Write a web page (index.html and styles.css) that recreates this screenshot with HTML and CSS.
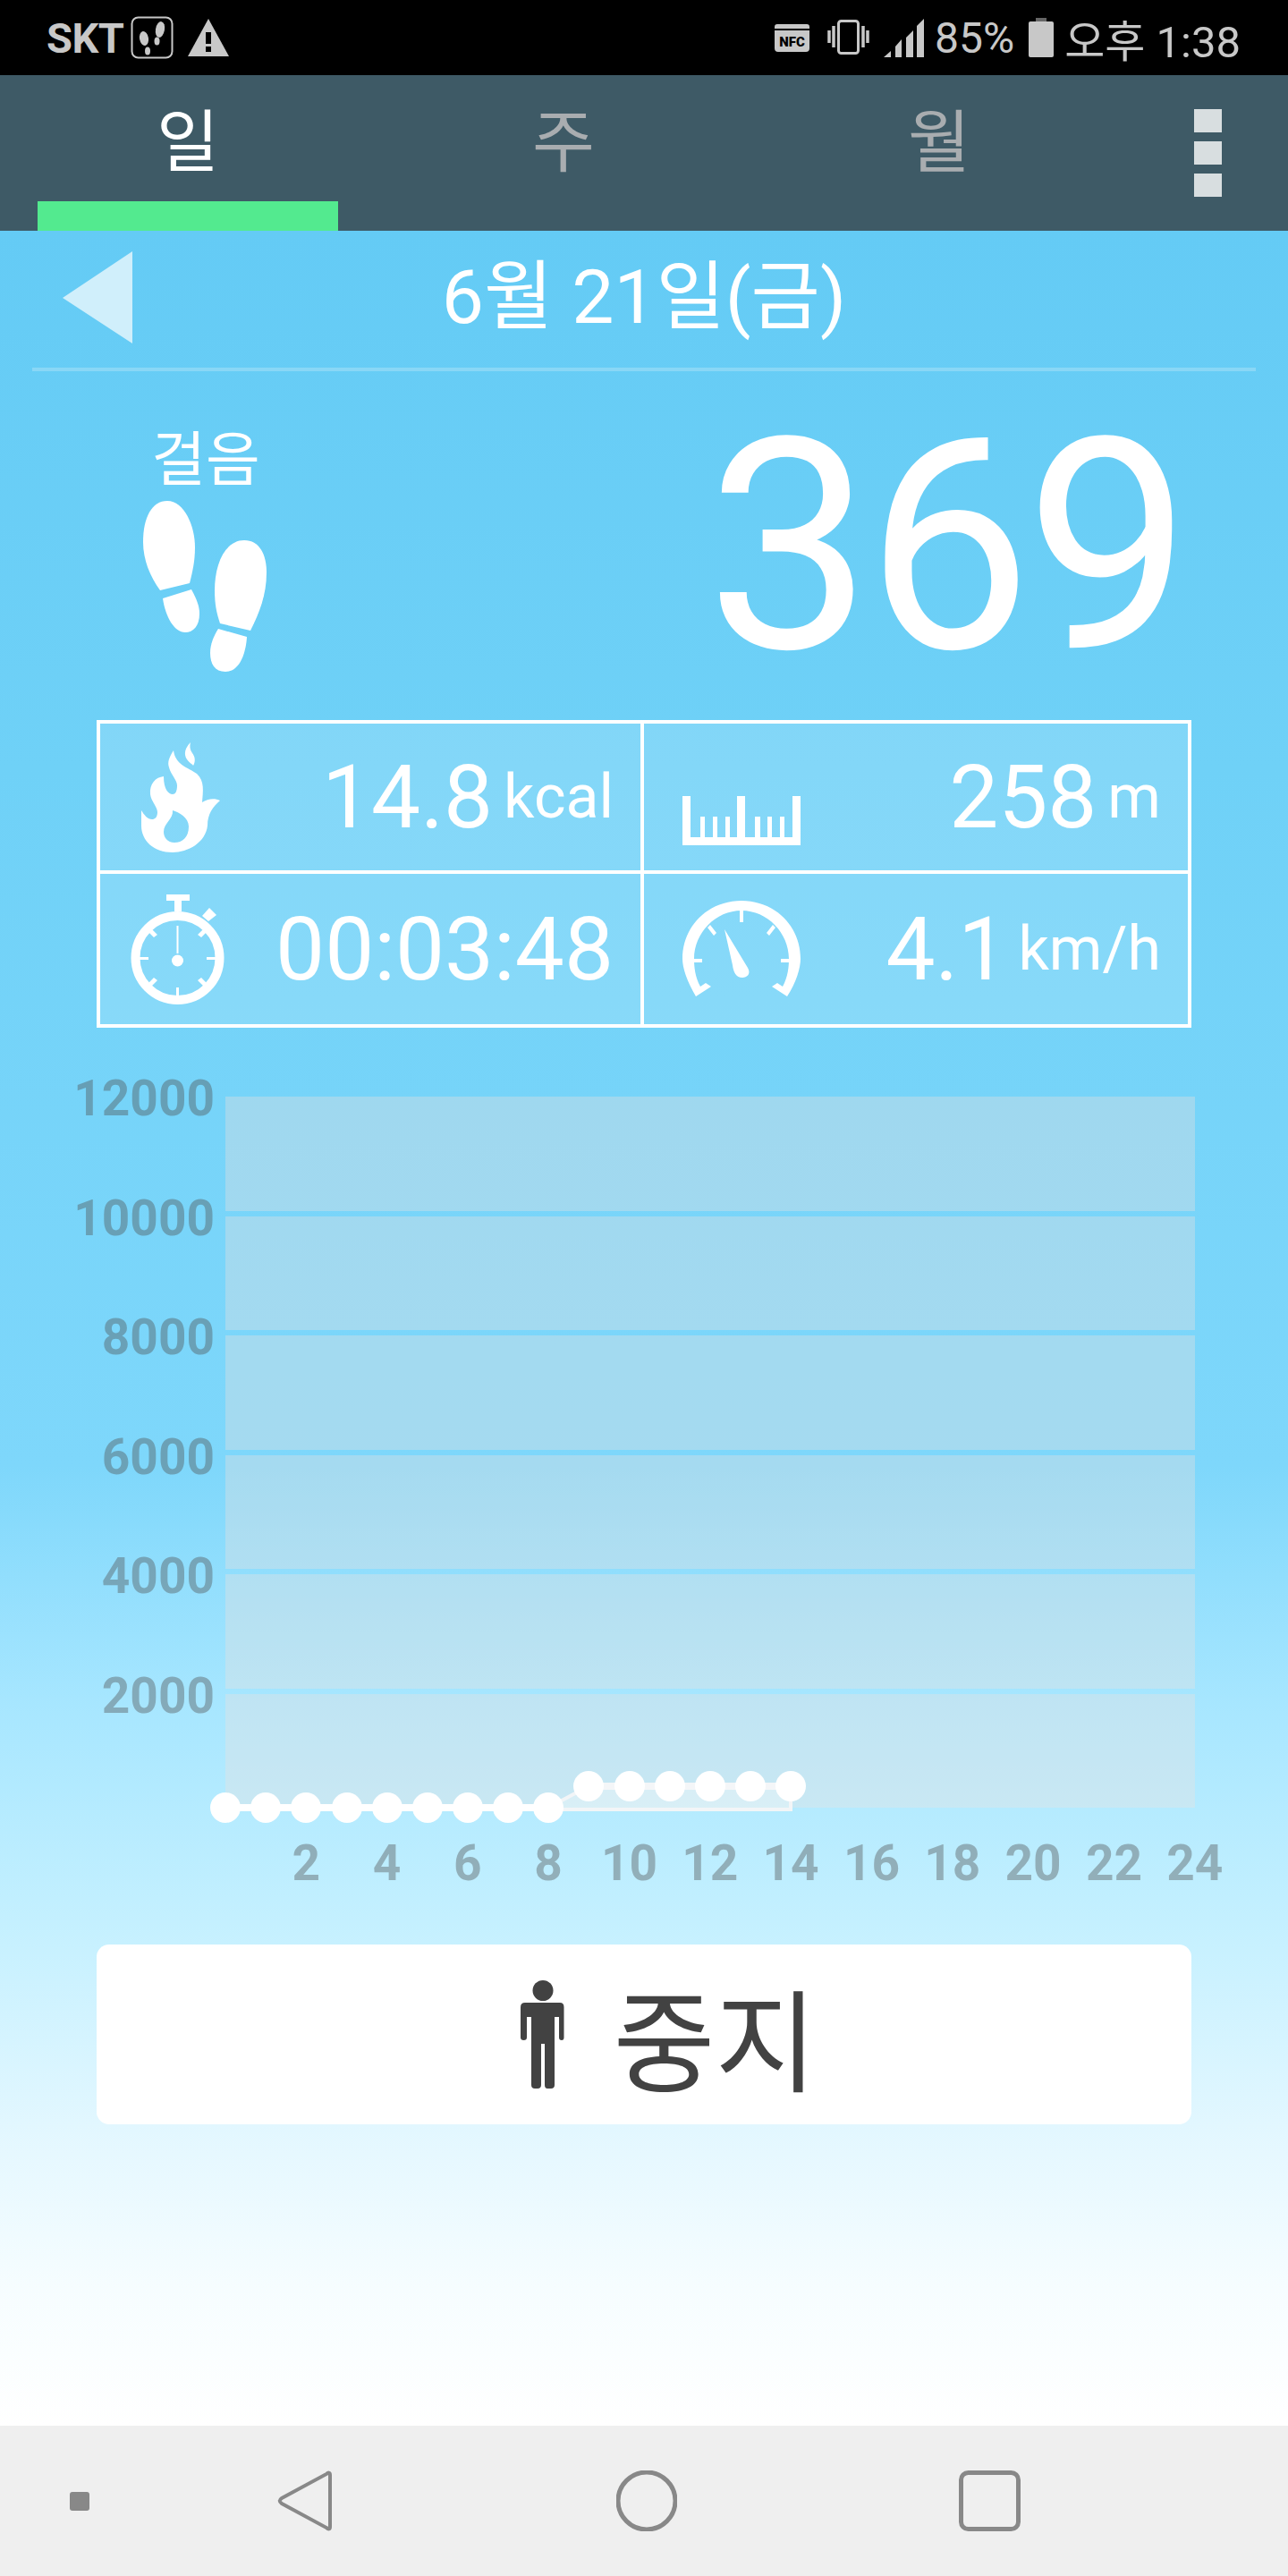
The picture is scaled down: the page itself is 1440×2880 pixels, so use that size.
FILE: index.html
```html
<!DOCTYPE html>
<html lang="ko">
<head>
    <meta charset="UTF-8">
    <meta name="viewport" content="width=device-width, initial-scale=1.0">
    <title>걸음</title>
    <link rel="stylesheet" href="styles.css">
</head>
<body>
    <div class="status-bar">
        <div class="status-left">
            <span class="carrier">SKT</span>
            <svg class="icon-app" viewBox="0 0 48 48">
                <rect x="1.5" y="1.5" width="45" height="45" rx="7" fill="none" stroke="#c8c8c8" stroke-width="2"/>
                <ellipse cx="15" cy="25" rx="5" ry="8" transform="rotate(-10 15 25)" fill="#c8c8c8"/>
                <ellipse cx="19" cy="39" rx="3" ry="4.5" fill="#c8c8c8"/>
                <ellipse cx="33" cy="15" rx="5" ry="9" transform="rotate(10 33 15)" fill="#c8c8c8"/>
                <ellipse cx="29.5" cy="28" rx="3" ry="4.5" fill="#c8c8c8"/>
            </svg>
            <svg class="icon-warn" viewBox="0 0 46 42">
                <path d="M23 0L46 42H0Z" fill="#c8c8c8"/>
                <rect x="20" y="15" width="6" height="13" fill="#000"/>
                <rect x="20" y="31" width="6" height="6" fill="#000"/>
            </svg>
        </div>
        <div class="status-right">
            <svg class="icon-nfc" viewBox="0 0 39 31">
                <path d="M3 0H36Q39 0 39 3V5H0V3Q0 0 3 0ZM0 7H39V27Q39 31 35 31H4Q0 31 0 27Z" fill="#c8c8c8"/>
                <text x="19.5" y="24.5" class="nfc-label">NFC</text>
            </svg>
            <svg class="icon-vibrate" viewBox="0 0 47 40">
                <rect x="12.5" y="1.5" width="22" height="36" rx="3" fill="none" stroke="#c8c8c8" stroke-width="3"/>
                <path d="M7 7V31M2 12V26M40 7V31M45 12V26" stroke="#c8c8c8" stroke-width="3.5" fill="none"/>
            </svg>
            <svg class="icon-signal" viewBox="0 0 45 43">
                <path d="M0 43L8 36V43ZM13 43V31L20 23V43ZM25 43V21L33 13V43ZM37 43V8L45 0V43Z" fill="#c8c8c8"/>
            </svg>
            <span class="battery-text">85%</span>
            <svg class="icon-battery" viewBox="0 0 28 44">
                <path d="M8 0H20V4H8Z" fill="#666"/>
                <path d="M2 4H26Q28 4 28 6V42Q28 44 26 44H2Q0 44 0 42V6Q0 4 2 4Z" fill="#c8c8c8"/>
            </svg>
            <span class="clock">오후 1:38</span>
        </div>
    </div>

    <div class="tabs">
        <div class="tab tab-active">일</div>
        <div class="tab">주</div>
        <div class="tab">월</div>
        <div class="menu-dots">
            <span></span>
            <span></span>
            <span></span>
        </div>
    </div>

    <div class="content">
        <div class="date-row">
            <svg class="back-arrow" viewBox="0 0 78 103">
                <path d="M78 0V103L0 52Z" fill="#d0effb"/>
            </svg>
            <div class="date-text">6월 21일(금)</div>
        </div>

        <div class="hero">
            <div class="hero-label">
                <div class="steps-title">걸음</div>
                <svg class="icon-feet" viewBox="0 0 140 195">
                    <path d="M27 0C46 0 58 28 58 52C58 68 55 80 52 92L19 100C8 85 0 66 0 46C0 18 10 0 27 0Z" fill="#fff"/>
                    <path d="M22 109L54 99C60 110 63 118 63 126C63 140 56 147 47 147C35 147 25 130 22 109Z" fill="#fff"/>
                    <path d="M113 44C130 44 138 60 138 80C138 105 130 125 120 145L86 137C82 125 80 115 80 100C80 70 92 44 113 44Z" fill="#fff"/>
                    <path d="M84 143L116 152C115 170 108 191 92 191C80 191 75 182 75 170C75 160 79 151 84 143Z" fill="#fff"/>
                </svg>
            </div>
            <div class="step-count">369</div>
        </div>

        <div class="stats">
            <div class="stat">
                <svg class="stat-icon icon-fire" viewBox="0 0 89 123">
                    <path d="M55 0C49 6 47 13 51 19C55 24 57 24 58 26C61 21 60 16 57 12C54 8 54 4 55 0Z" fill="#fff"/>
                    <path fill-rule="evenodd" fill="#fff" d="M36 9C31 17 29 22 31 28C33 36 40 42 40 48C40 55 38 58 35 58C30 58 25 52 25 38C16 39 9 46 10 58C11 66 18 72 18 78C18 84 15 86 12 86C7 86 3 81 0 76V93C0 110 14 123 35 123C52 123 72 112 74 93C74 80 80 72 88 65C82 62 74 63 68 67C69 55 71 43 62 35C52 28 38 25 36 9ZM35 76C42 78 53 84 53 94C53 106 46 112 37 112C29 112 25 106 25 100C25 90 36 86 35 76Z"/>
                </svg>
                <span class="stat-value">14.8</span>
                <span class="stat-unit">kcal</span>
            </div>
            <div class="stat">
                <svg class="stat-icon icon-ruler" viewBox="0 0 132 55">
                    <path d="M0 0H9V46H20V23H25V46H34V23H39V46H48V23H53V46H61V0H70V46H81V23H87V46H95V23H100V46H109V23H114V46H123V0H132V55H0Z" fill="#fff"/>
                </svg>
                <span class="stat-value">258</span>
                <span class="stat-unit">m</span>
            </div>
            <div class="stat">
                <svg class="stat-icon icon-watch" viewBox="0 0 105 123">
                    <path d="M40 0H66V7H57V19H49V7H40Z" fill="#fff"/>
                    <path d="M80 24L88 15L96 23L87 30Z" fill="#fff"/>
                    <ellipse cx="52.5" cy="71" rx="47" ry="47" fill="none" stroke="#fff" stroke-width="10"/>
                    <path d="M51.5 35H53.5V66H51.5ZM6 70H20V73H6ZM85 70H99V73H85ZM51 104H54V118H51ZM19 41L23 38L30 45L26 48ZM86 41L82 38L75 45L79 48ZM19 100L23 103L30 96L26 93ZM86 100L82 103L75 96L79 93Z" fill="#fff"/>
                    <circle cx="52.5" cy="74" r="6.5" fill="#fff"/>
                </svg>
                <span class="stat-value">00:03:48</span>
            </div>
            <div class="stat">
                <svg class="stat-icon icon-gauge" viewBox="0 0 132 108">
                    <path d="M15 107C5 90 0 75 0 65C0 28 29 0 66 0C103 0 132 28 132 65C132 75 127 92 117 107L100 96L106 92L112 96C118 85 119 74 119 65C119 36 95 11 66 11C37 11 13 36 13 65C13 74 14 85 20 96L26 92L32 96Z" fill="#fff"/>
                    <path d="M64 11H68V24H64ZM12 65H22V69H12ZM110 65H120V69H110ZM28 30L31 27L38 36L35 39ZM104 30L101 27L94 36L97 39Z" fill="#fff"/>
                    <path d="M47 32L73 75C77 82 72 86 67 86C60 86 57 80 56 72Z" fill="#fff"/>
                </svg>
                <span class="stat-value">4.1</span>
                <span class="stat-unit">km/h</span>
            </div>
        </div>

        <div class="chart">
            <div class="y-axis">
                <span>12000</span>
                <span>10000</span>
                <span>8000</span>
                <span>6000</span>
                <span>4000</span>
                <span>2000</span>
            </div>
            <div class="plot">
                <div class="plot-band"></div>
                <div class="plot-band"></div>
                <div class="plot-band"></div>
                <div class="plot-band"></div>
                <div class="plot-band"></div>
                <div class="plot-band"></div>
            </div>
            <svg class="series" viewBox="0 0 740 80">
                <path d="M381 47L426 23H652V49H381Z" fill="#fff" fill-opacity="0.3" stroke="#f2f5f7" stroke-width="4"/>
                <path d="M426 23H652" stroke="#f4f6f8" stroke-width="8" fill="none"/>
                <path d="M20 47H381" stroke="#fff" stroke-width="8" fill="none"/>
                <g fill="#fff">
                    <circle cx="20" cy="47" r="17"/>
                    <circle cx="65" cy="47" r="17"/>
                    <circle cx="110" cy="47" r="17"/>
                    <circle cx="156" cy="47" r="17"/>
                    <circle cx="201" cy="47" r="17"/>
                    <circle cx="246" cy="47" r="17"/>
                    <circle cx="291" cy="47" r="17"/>
                    <circle cx="336" cy="47" r="17"/>
                    <circle cx="381" cy="47" r="17"/>
                    <circle cx="426" cy="23" r="17"/>
                    <circle cx="472" cy="23" r="17"/>
                    <circle cx="517" cy="23" r="17"/>
                    <circle cx="562" cy="23" r="17"/>
                    <circle cx="607" cy="23" r="17"/>
                    <circle cx="652" cy="23" r="17"/>
                </g>
            </svg>
            <div class="x-axis">
                <span>2</span>
                <span>4</span>
                <span>6</span>
                <span>8</span>
                <span>10</span>
                <span>12</span>
                <span>14</span>
                <span>16</span>
                <span>18</span>
                <span>20</span>
                <span>22</span>
                <span>24</span>
            </div>
        </div>

        <button class="stop-button">
            <svg class="icon-person" viewBox="0 0 49 121">
                <circle cx="25" cy="11.5" r="11.5" fill="#424242"/>
                <path d="M5 25H44Q48.5 25 48.5 30V64Q48.5 67 46 67Q43 67 43 64V41H38V117Q38 121 34 121H30Q27 121 27 117V71H23V117Q23 121 19 121H16Q12 121 12 117V41H7V64Q7 67 3.5 67Q0 67 0 64V30Q0 25 5 25Z" fill="#424242"/>
            </svg>
            <span>중지</span>
        </button>
    </div>

    <div class="nav-bar">
        <span class="nav-dot"></span>
        <svg class="nav-icon nav-back" viewBox="0 0 62 68">
            <path d="M59 5V63C59 66 57 66 55 64L5 37C2 35 2 33 5 31L55 4C57 2 59 2 59 5Z" fill="none" stroke="#888" stroke-width="4"/>
        </svg>
        <svg class="nav-icon nav-home" viewBox="0 0 68 68">
            <circle cx="34" cy="34" r="32" fill="none" stroke="#888" stroke-width="5"/>
        </svg>
        <svg class="nav-icon nav-recent" viewBox="0 0 69 68">
            <rect x="2.5" y="2.5" width="64" height="63" rx="8" fill="none" stroke="#888" stroke-width="5"/>
        </svg>
    </div>
</body>
</html>
```

FILE: styles.css
```css
* {
    box-sizing: border-box;
}
body {
    margin: 0;
    width: 1440px;
    height: 2880px;
    overflow: hidden;
    display: flex;
    flex-direction: column;
    font-family: Roboto, 'Noto Sans CJK KR', sans-serif;
    color: white;
}
svg {
    display: block;
    flex: none;
}

/* status bar */
.status-bar {
    height: 84px;
    background-color: #000;
    color: #c8c8c8;
    display: flex;
    justify-content: space-between;
    align-items: center;
    padding: 0 53px 0 52px;
    font-size: 49px;
}
.status-left,
.status-right {
    display: flex;
    align-items: center;
}
.carrier {
    font-size: 47px;
    font-weight: 700;
    letter-spacing: -0.5px;
}
.icon-app {
    width: 48px;
    height: 48px;
    margin-left: 8px;
}
.icon-warn {
    width: 46px;
    height: 42px;
    margin-left: 16px;
}
.icon-nfc {
    width: 39px;
    height: 31px;
}
.nfc-label {
    font-family: Roboto, sans-serif;
    font-size: 15px;
    font-weight: 900;
    text-anchor: middle;
    fill: #000;
}
.icon-vibrate {
    width: 47px;
    height: 40px;
    margin-left: 20px;
}
.icon-signal {
    width: 45px;
    height: 43px;
    margin-left: 16px;
}
.battery-text {
    margin-left: 12px;
    font-size: 48px;
}
.icon-battery {
    width: 28px;
    height: 44px;
    margin-left: 16px;
}
.clock {
    margin-left: 12px;
}

/* tabs */
.tabs {
    height: 174px;
    background-color: #3e5a66;
    display: grid;
    grid-template-columns: 420px 420px 420px 1fr;
}
.tab {
    display: flex;
    flex-direction: column;
    align-items: center;
    padding-top: 23px;
    font-size: 76px;
    line-height: 106px;
    color: #a9adb0;
}
.tab-active {
    color: white;
}
.tab-active::after {
    content: "";
    width: 336px;
    height: 33px;
    margin-top: 12px;
    background-color: #53ea8f;
}
.menu-dots {
    display: flex;
    flex-direction: column;
    align-items: center;
    gap: 10px;
    padding-top: 38px;
}
.menu-dots span {
    width: 31px;
    height: 26px;
    background-color: #d8dee0;
}

/* main area */
.content {
    flex: 1;
    background: linear-gradient(#64cbf5 0, #6fd1f7 600px, #7ed7fb 1380px, #a6e6ff 1640px, #c4f0ff 1890px, #e6f8ff 2150px, #f6fdff 2300px, #fff 2454px);
    display: flex;
    flex-direction: column;
}
.date-row {
    height: 157px;
    margin: 0 36px;
    border-bottom: 4px solid #89d7f6;
    display: grid;
    grid-template-columns: 1fr auto 1fr;
    align-items: center;
    padding-bottom: 4px;
}
.back-arrow {
    width: 78px;
    height: 103px;
    margin-left: 34px;
}
.date-text {
    font-size: 84px;
    line-height: 100px;
}

.hero {
    height: 390px;
    padding: 55px 115px 0 160px;
    display: flex;
    justify-content: space-between;
}
.hero-label {
    display: flex;
    flex-direction: column;
    align-items: center;
    width: 140px;
}
.steps-title {
    font-size: 66px;
    line-height: 90px;
}
.icon-feet {
    width: 140px;
    height: 195px;
}
.step-count {
    font-size: 330px;
    line-height: 340px;
    letter-spacing: -7px;
    margin-top: -28px;
}

.stats {
    width: 1224px;
    height: 344px;
    margin-left: 108px;
    border: 4px solid white;
    display: grid;
    grid-template-columns: 1fr 1fr;
    grid-template-rows: 1fr 1fr;
    background-color: rgba(255, 255, 255, 0.14);
}
.stat {
    display: flex;
    align-items: center;
    justify-content: flex-end;
    padding-right: 30px;
    border-bottom: 4px solid white;
    border-right: 4px solid white;
}
.stat:nth-child(2n) {
    border-right: none;
}
.stat:nth-child(n+3) {
    border-bottom: none;
}
.stat-icon {
    margin-right: auto;
}
.stat-value {
    font-size: 98px;
}
.stat-unit {
    font-size: 68px;
    margin-left: 12px;
}
.icon-fire {
    width: 89px;
    height: 123px;
    margin-left: 46px;
}
.icon-ruler {
    width: 132px;
    height: 55px;
    margin-left: 43px;
    margin-top: 52px;
}
.icon-watch {
    width: 105px;
    height: 123px;
    margin-left: 34px;
}
.icon-gauge {
    width: 132px;
    height: 108px;
    margin-left: 43px;
}

/* chart */
.chart {
    position: relative;
    margin-top: 77px;
    display: grid;
    grid-template-columns: 252px 1084px;
    grid-template-rows: 795px auto;
}
.y-axis {
    display: flex;
    flex-direction: column;
    align-items: flex-end;
    padding-right: 12px;
    margin-top: -28px;
    font-size: 55px;
    font-weight: 700;
    line-height: 60px;
    color: rgba(80, 80, 80, 0.4);
}
.y-axis span {
    height: 133.5px;
}
.plot {
    display: flex;
    flex-direction: column;
    gap: 6px;
}
.plot-band {
    flex: 1;
    background-color: rgba(240, 225, 220, 0.34);
}
.series {
    position: absolute;
    left: 232px;
    top: 748px;
    width: 740px;
    height: 80px;
}
.x-axis {
    grid-column: 2;
    display: grid;
    grid-template-columns: repeat(12, 90.33px);
    margin: 29px 0 0 45px;
    font-size: 55px;
    font-weight: 700;
    line-height: 66px;
    color: rgba(80, 80, 80, 0.4);
    text-align: center;
}

.stop-button {
    width: 1224px;
    height: 201px;
    margin: 58px 0 0 108px;
    padding: 0 0 0 56px;
    border: none;
    border-radius: 14px;
    background-color: white;
    color: #424242;
    font: inherit;
    font-size: 124px;
    display: flex;
    align-items: center;
    justify-content: center;
    gap: 54px;
}
.icon-person {
    width: 49px;
    height: 121px;
}

/* android nav */
.nav-bar {
    height: 168px;
    background-color: #efefef;
    display: flex;
    align-items: center;
}
.nav-dot {
    width: 22px;
    height: 21px;
    margin-left: 78px;
    border-radius: 3px;
    background-color: #888;
}
.nav-back {
    width: 62px;
    height: 68px;
    margin-left: 210px;
}
.nav-home {
    width: 68px;
    height: 68px;
    margin-left: 317px;
}
.nav-recent {
    width: 69px;
    height: 68px;
    margin-left: 315px;
}
```
